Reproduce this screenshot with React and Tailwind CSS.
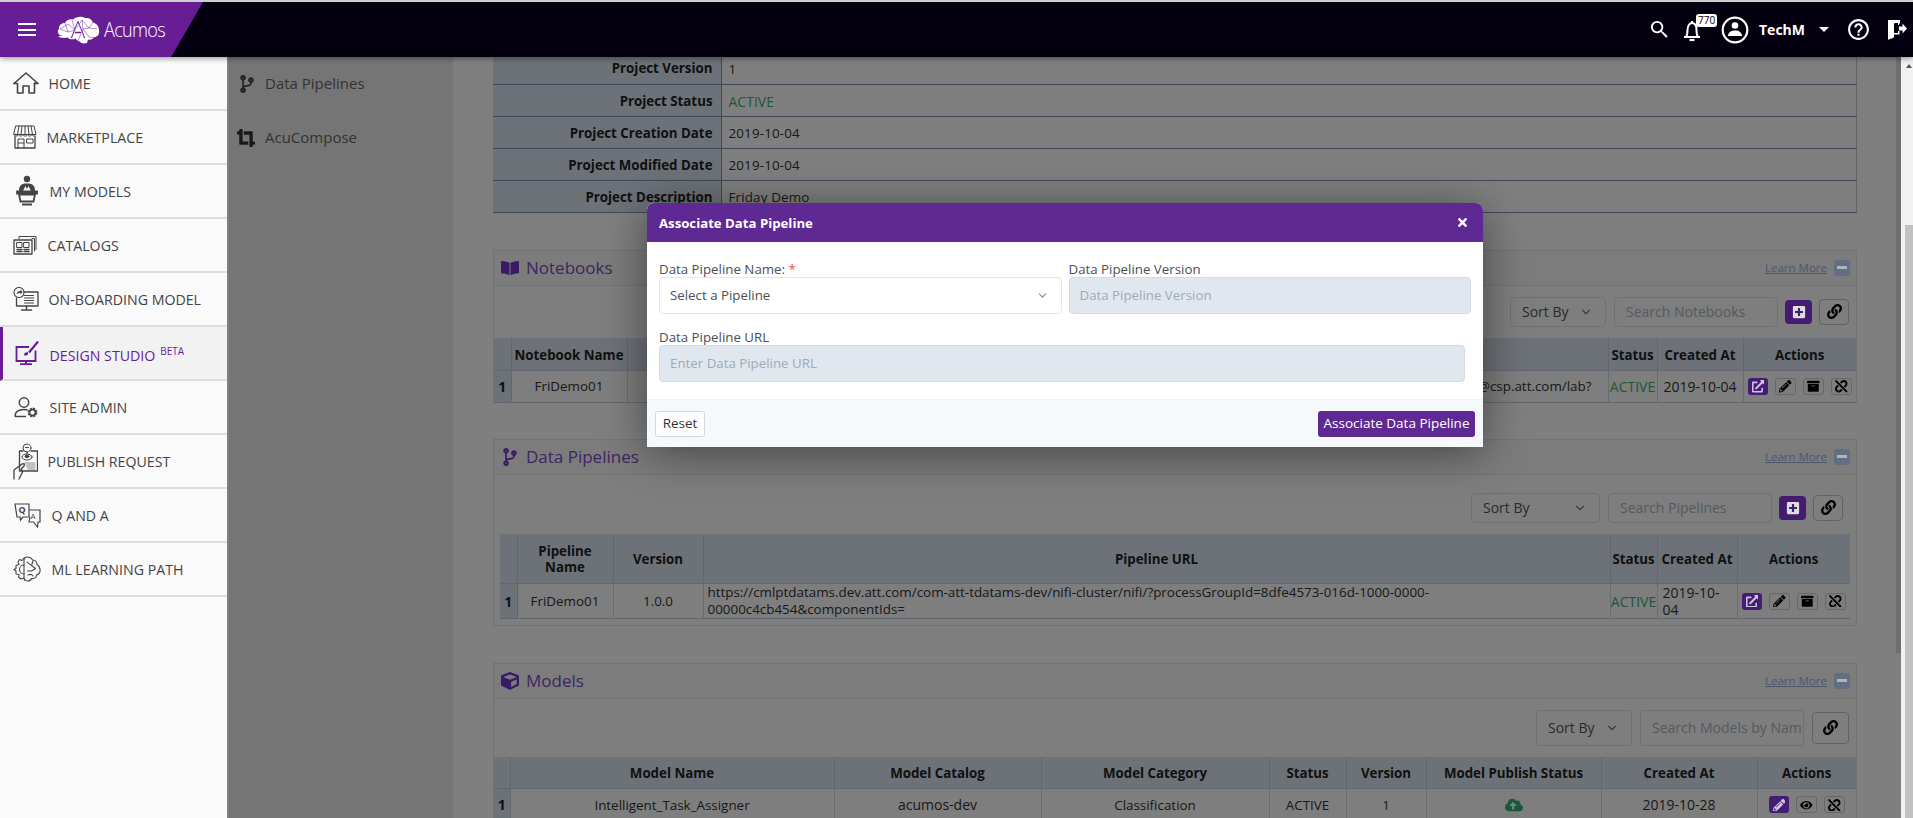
import React from "react";
import {
  FaArchive,
  FaBookOpen,
  FaCloudUploadAlt,
  FaCodeBranch,
  FaCropAlt,
  FaCube,
  FaExternalLinkAlt,
  FaEye,
  FaLink,
  FaPencilAlt,
  FaPlusSquare,
  FaTimes,
  FaUnlink,
} from "react-icons/fa";
import { MdHelpOutline, MdSearch } from "react-icons/md";
import { ChevronDown } from "lucide-react";

const line = { fill: "none", stroke: "#444", strokeWidth: 1.3, strokeLinejoin: "round", strokeLinecap: "round" };

const HomeIcon = () => (
  <svg width="26" height="22" viewBox="0 0 26 22" {...line} strokeWidth="1.6">
    <path d="M1 11.5 13 1l12 10.5h-3.5" />
    <path d="M1 11.5h3.5V21h5.5v-7h6v7h5.5V11" />
  </svg>
);

const MarketIcon = () => (
  <svg width="24" height="24" viewBox="0 0 24 24" {...line} strokeWidth="1">
    <path d="M3 1h18l2 8.5H1z" />
    <path d="M6 1 4.5 9.5M9 1l-1 8.5M12 1v8.5M15 1l1 8.5M18 1l1.5 8.5" />
    <path d="M1 9.5c0 2 4 2 4.500 0 .5 2 4 2 4.500 0 .5 2 4 2 4.500 0 .5 2 4 2 4.500 0 .5 2 3.500 2 3.500 0" />
    <path d="M2 11.500V23h20V11.500" strokeWidth="1.300" />
    <path d="M5 23v-9h6v9M5 18h6M14 14h6v4h-6z" />
  </svg>
);

const ModelsIcon = () => (
  <svg width="22" height="32" viewBox="0 0 22 32">
    <circle cx="11" cy="4" r="3.200" fill="#444" />
    <path d="M3 16c0-6 3-7.500 8-7.500s8 1.500 8 7.500h-4l-2.500-5-1.500 3-1.500-3L7 16z" fill="#444" />
    <path d="M1 16.500h20v2H1zM3 19.500h16l-1.500 7h-13z" fill="none" stroke="#444" strokeWidth="1.800" />
    <path d="M6 29.500h10" stroke="#444" strokeWidth="2" />
  </svg>
);

const CatalogIcon = () => (
  <svg width="24" height="20" viewBox="0 0 24 20" {...line} strokeWidth="1">
    <path d="M1 5h18v14H1z" strokeWidth="1.300" />
    <path d="M19 3.500h2.500V16M19 1.500h4V14.500M6 3.500V1.500h13" />
    <path d="M4 7.500h5v5H4zM11 7.500h5v5h-5z" />
    <path d="M4 14.500h5M11 14.500h5M4 16.500h5M11 16.500h5" strokeWidth="1.400" />
  </svg>
);

const OnboardIcon = () => (
  <svg width="26" height="24" viewBox="0 0 26 24" {...line} strokeWidth="1.100">
    <circle cx="6" cy="5.500" r="5" />
    <path d="M3.500 7.500c.5-2.500 2-3.500 4-3.500V2.500l2 2.500-2 2.500V6c-1.500 0-3 .5-4 1.500z" fill="#444" stroke="none" />
    <path d="M11 5h14v14H3.500v-7.500" strokeWidth="1.300" />
    <path d="M11.500 8.500h9M11.500 11h9M11.500 13.500h9M11.500 16h9" strokeWidth="1.200" />
    <path d="M13.500 19v2.500M8.500 23h10" strokeWidth="1.500" />
  </svg>
);

const DesignIcon = () => (
  <svg width="24" height="24" viewBox="0 0 24 24" fill="none" stroke="#6a1b9a" strokeWidth="1.800">
    <path d="M14 6H1.500v14h19V9.500" />
    <path d="M11 21v2M5 23.200h12" strokeWidth="2" />
    <path d="m23 .5-9 11" strokeWidth="2.200" />
    <path d="M9 14c0-2 2-3.200 4-2.500 1 2-1.500 4-4 2.500z" fill="#6a1b9a" stroke="none" />
  </svg>
);

const AdminIcon = () => (
  <svg width="24" height="21" viewBox="0 0 24 21">
    <circle cx="10" cy="5.500" r="4.700" fill="none" stroke="#444" strokeWidth="1.500" />
    <path d="M1 19.500c0-4.500 3-7 9-7 1.500 0 2.700.2 3.700.5M1 19.500h11" fill="none" stroke="#444" strokeWidth="1.500" />
    <circle cx="18.500" cy="15.500" r="3.600" fill="none" stroke="#444" strokeWidth="2.600" strokeDasharray="2 .8" />
    <circle cx="18.500" cy="15.500" r="3" fill="none" stroke="#444" strokeWidth="1.400" />
  </svg>
);

const PublishIcon = () => (
  <svg width="25" height="37" viewBox="0 0 25 37" {...line} strokeWidth="1">
    <circle cx="14" cy="5" r="4" />
    <path d="M12.500 4.500h3M14 9v4" />
    <path d="M10 8H6.500v20h18V8H18" strokeWidth="1.300" />
    <ellipse cx="14" cy="14" rx="5" ry="3" />
    <ellipse cx="14" cy="13.500" rx="2" ry="1.200" fill="#444" />
    <path d="M11 20h11M13 22h9M14 24h8M15 26h7" strokeWidth="1" stroke="#888" />
    <path d="M1 36V27l8-6c2-.8 3 .8 2 2l-3 3.500c2 1 2 3 .5 4.500L6 36" strokeWidth="1.300" />
  </svg>
);

const QaIcon = () => (
  <svg width="27" height="25" viewBox="0 0 27 25">
    <path d="M1 1h14v13H9l-2.500 3-.5-3H3z" fill="none" stroke="#444" strokeWidth="1.200" />
    <path d="M15 7h11v12h-2l-.5 5-4-5H15l1-5" fill="none" stroke="#444" strokeWidth="1.200" />
    <text x="4.500" y="10" fontSize="9" fontWeight="700" fill="#444" fontFamily="Open Sans">Q</text>
    <text x="16.500" y="16" fontSize="8" fill="#444" fontFamily="Open Sans">A</text>
  </svg>
);

const LearnIcon = () => (
  <svg width="28" height="26" viewBox="0 0 28 26" {...line} strokeWidth="1.100">
    <path d="M11 2 9 4.500 6.500 3.500 5 6 6 8.500 3 9.500v3l-2 1 2 1.500v3l3 .5-.5 2.500L8 23l2.500-1 1.500 2.500" />
    <path d="M11 9a4.500 4.500 0 0 0 0 9" />
    <path d="M14 1c-2 0-3 1.500-3 3v17c0 2 1.500 4 3.500 4 2 0 3.500-1 4-2.500 3 .5 5-1 5-3.500 2.500-1 4-3 3.500-5.500 0-2.500-1.500-4-3-5 0-3-2-4.500-4.500-4.500C18.500 2 16 1 14 1z" />
    <path d="M14 6c2 1 2 3 4.500 3M20 5l-1.500 4.500 4 3-4 2.500-4 0M15 19c2-1 4-.5 5 1" />
  </svg>
);

const BrainLogo = () => (
  <svg width="43" height="28" viewBox="0 0 43 28">
    <path
      d="M6 20C1 20-.5 15 2 13 1.500 9 5 7 8 7c1-3 5-4.500 8-3.500C19 .5 25 0 28 2c4-.5 7 1.500 8 4.500 4 1 6 4.500 6 8 1 4-2 6.500-5 7-1.500 2-4 2.500-6 2l-1 3.500c-3 1-6 .5-7.500-1.500-2-.5-3-1.500-4-3-2.500 1.500-6 1-8-1-3 1-8 .5-9.500-1.500z"
      fill="#fff"
    />
    <path d="M3 13l8-5 7 6 7-10 7 8 8 1M8 7l3 9 7-2-3-10M25 4l1 9 6-1 4-6M11 16l-8-3M26 13l6 8 7 1M26 13l-5 12" stroke="#671d96" strokeWidth=".5" fill="none" />
    <path d="m14.500 22 6.500-16 6.500 16M17 16.500h8" stroke="#671d96" strokeWidth="1.300" fill="none" />
    <path d="m15.500 21.500 5.500-14 5.500 14" stroke="#fff" strokeWidth=".7" fill="none" />
  </svg>
);

const UserCircle = () => (
  <svg width="28" height="28" viewBox="0 0 28 28">
    <circle cx="14" cy="14" r="12.300" fill="none" stroke="#fff" strokeWidth="2.200" />
    <circle cx="14" cy="9.500" r="3.300" fill="#fff" />
    <path d="M7 20c0-3.500 3-5.500 7-5.500s7 2 7 5.500z" fill="#fff" />
  </svg>
);

const BellIcon = () => (
  <svg width="18" height="22" viewBox="0 0 18 22" fill="none" stroke="#fff" strokeWidth="2">
    <path d="M1 17h16M3 17c1.500-2 1.500-4 1.500-7S6 3 9 3s4.500 3 4.500 7 0 5 1.500 7" />
    <path d="M9 1v2" />
    <path d="M6.500 20h5" strokeWidth="2.200" />
  </svg>
);

const ExitIcon = () => (
  <svg width="20" height="21" viewBox="0 0 20 21">
    <path d="M1 1h12v3.500h-1.500V2.700L7 4.500v14l-6 2.300z" fill="#fff" />
    <path d="M7 2.700h5V6H11V4H7zM7 15.500h5.500V12H11v2H7z" fill="#fff" />
    <path d="M12 7.500h3.500V4.500L20 9.500l-4.500 5v-3H12z" fill="#fff" />
  </svg>
);

const navItems = [
  { label: "HOME", Icon: HomeIcon, box: "w-[35.500px]" },
  { label: "MARKETPLACE", Icon: MarketIcon, box: "w-[33.500px]" },
  { label: "MY MODELS", Icon: ModelsIcon, box: "w-[36.500px] pl-[3px]" },
  { label: "CATALOGS", Icon: CatalogIcon, box: "w-[34.500px]" },
  { label: "ON-BOARDING MODEL", Icon: OnboardIcon, box: "w-[35.500px]" },
  { label: "DESIGN STUDIO", Icon: DesignIcon, box: "w-[36.500px] pl-[2px]", active: true },
  { label: "SITE ADMIN", Icon: AdminIcon, box: "w-[36.500px] pl-[1px]" },
  { label: "PUBLISH REQUEST", Icon: PublishIcon, box: "w-[34.500px]" },
  { label: "Q AND A", Icon: QaIcon, box: "w-[38.500px] pl-[1px]" },
  { label: "ML LEARNING PATH", Icon: LearnIcon, box: "w-[38.500px]" },
];

function Header() {
  return (
    <header className="relative z-30 flex h-[57px] shrink-0 items-center border-t-2 border-[#cfcfcf] bg-[#05000f] shadow-[0_2px_5px_rgba(0,0,0,0.35)]">
      <div className="flex h-full w-[203px] items-center bg-[#671d96] [clip-path:polygon(0_0,100%_0,84.300%_100%,0_100%)]">
        <div className="ml-[18px] flex w-[18px] flex-col gap-[3.500px]">
          <span className="h-[2px] bg-white" />
          <span className="h-[2px] bg-white" />
          <span className="h-[2px] bg-white" />
        </div>
        <div className="ml-[21px]">
          <BrainLogo />
        </div>
        <span className="ml-[4px] origin-left scale-x-[0.86] text-[21px] font-light tracking-[-0.8px] text-white">Acumos</span>
      </div>
      <div className="ml-auto flex items-center text-white">
        <MdSearch className="text-[23px]" />
        <div className="relative ml-[12px] mr-[20px] mt-[2px]">
          <BellIcon />
          <span className="absolute left-[13px] top-[-6px] rounded-[3px] bg-white px-[2px] text-[10px] leading-[13px] text-black">770</span>
        </div>
        <UserCircle />
        <span className="ml-[10px] text-[14px] font-bold">TechM</span>
        <span className="ml-[14px] mr-[5px] h-0 w-0 border-x-[5px] border-t-[5px] border-x-transparent border-t-white" />
        <MdHelpOutline className="ml-[12px] text-[25px]" />
        <span className="ml-[16px] mr-[6px]">
          <ExitIcon />
        </span>
      </div>
    </header>
  );
}

function Sidebar() {
  return (
    <aside className="relative z-20 w-[227px] shrink-0 bg-[#fafafa] text-[14.200px] text-[#444]">
      {navItems.map(({ label, Icon, box, active }) => (
        <div
          key={label}
          className={
            active
              ? "flex h-[54px] items-center border-b-2 border-[#dedede] border-l-[3px] border-l-[#6a1b9a] bg-[#f2f2f2] pl-[10px] text-[#6a1b9a]"
              : "flex h-[54px] items-center border-b-2 border-[#dedede] pl-[13px]"
          }
        >
          <span className={`flex shrink-0 items-center ${box}`}>
            <Icon />
          </span>
          <span className={active ? "mt-[6px]" : "mt-[2px]"}>{label}</span>
          {active && <span className="ml-[5px] mt-[-3px] text-[10px]">BETA</span>}
        </div>
      ))}
    </aside>
  );
}

function SubNav() {
  return (
    <nav className="w-[226px] shrink-0 border-l-2 border-white bg-[#ebebeb] text-[15px] text-[#666]">
      <div className="flex h-[54px] items-center pl-[10px]">
        <FaCodeBranch className="w-[16px] text-[18px] text-[#444]" />
        <span className="ml-[10px] mt-[-2px]">Data Pipelines</span>
      </div>
      <div className="flex h-[54px] items-center pl-[8px]">
        <FaCropAlt className="w-[18px] text-[18px] text-[#333]" />
        <span className="ml-[10px] mt-[-2px]">AcuCompose</span>
      </div>
    </nav>
  );
}

function InfoTable() {
  const rows = [
    ["Project Version", "1"],
    ["Project Status", "ACTIVE"],
    ["Project Creation Date", "2019-10-04"],
    ["Project Modified Date", "2019-10-04"],
    ["Project Description", "Friday Demo"],
  ];
  return (
    <table className="mt-[-5px] w-full table-fixed border-collapse border-r border-[#c5c9d0]">
      <tbody>
        {rows.map(([k, v]) => (
          <tr key={k} className="h-[32px] border-b border-[#7f90b8]">
            <th className="w-[228px] border-r border-[#7f90b8] bg-[#dbe5f0] pr-[8px] pt-[3px] text-right text-[13.300px] font-bold text-[#222]">{k}</th>
            <td className={v === "ACTIVE" ? "pl-[7px] pt-[3px] font-medium text-[#42ad70]" : "pl-[7px] pt-[3px] text-[13.400px] tracking-[0.15px]"}>{v}</td>
          </tr>
        ))}
      </tbody>
    </table>
  );
}

function SortSelect({ className }) {
  return (
    <div className={`flex items-center justify-between rounded-[4px] border border-[#dde1e6] pl-[11px] pr-[12px] text-[#555] ${className}`}>
      Sort By
      <ChevronDown size={14} className="text-[#777]" />
    </div>
  );
}

function SearchBox({ text, className }) {
  return (
    <div className={`ml-[8px] flex w-[164px] items-center overflow-hidden whitespace-nowrap rounded-[4px] border border-[#dde1e6] pl-[11px] pr-[10px] text-[#a9b4c2] ${className}`}>
      {text}
    </div>
  );
}

function AddBtn() {
  return (
    <span className="relative z-20 ml-[7px] flex h-[24px] w-[27px] items-center justify-center rounded-[4px] bg-[#431b70] text-[14px] text-[#ddd]">
      <FaPlusSquare />
    </span>
  );
}

function LinkBtn({ className }) {
  return (
    <span className={`flex items-center justify-center rounded-[4px] border border-[#c4c4c4] text-[15px] text-black ${className}`}>
      <FaLink />
    </span>
  );
}

function ActionBtn({ children, purple }) {
  return purple ? (
    <span className="relative z-20 flex h-[17px] w-[20px] items-center justify-center rounded-[3px] bg-[#451d75] text-[12.500px] text-[#cfc6e0]">{children}</span>
  ) : (
    <span className="flex h-[17px] w-[21px] items-center justify-center rounded-[3px] border border-[#cfcfcf] text-[12.500px] text-black">{children}</span>
  );
}

function Card({ icon, title, children, className }) {
  return (
    <section className={`border border-[#e6e6e6] bg-[#fcfcfc] ${className}`}>
      <div className="flex h-[35px] items-center border-b border-[#e6e6e6] bg-[#f8f8f8] pl-[7px] pr-[6px]">
        <span className="text-[18px] text-[#7534c8]">{icon}</span>
        <span className="ml-[7px] text-[17px] text-[#7a4fc0]">{title}</span>
        <a className="ml-auto text-[11.500px] text-[#9ab0d8] underline">Learn More</a>
        <span className="relative z-20 ml-[7px] flex h-[16px] w-[16px] items-center justify-center rounded-[2px] bg-[#626e82]">
          <span className="h-[3px] w-[10px] bg-[#aeb2ba]" />
        </span>
      </div>
      {children}
    </section>
  );
}

const th = "border-r border-[#c5cfdb] bg-[#dbe5f0] pt-[2px] text-[13.300px] font-bold leading-[16px] text-[#222] last:border-r-0";
const td = "border-r border-[#d5dae0] text-center text-[13.400px] last:border-r-0";
const date = "border-r border-[#d5dae0] text-center text-[14px] last:border-r-0";
const idx = "border-r border-[#c5cfdb] bg-[#dbe5f0] text-center font-bold text-[#222]";
const active = "border-r border-[#d5dae0] text-center text-[14px] text-[#42ad70]";

function NotebooksCard() {
  return (
    <Card icon={<FaBookOpen />} title="Notebooks" className="mt-[37px] h-[153px]">
      <div className="flex h-[52px] items-center justify-end pr-[7px]">
        <SortSelect className="h-[30px] w-[96px]" />
        <SearchBox text="Search Notebooks" className="h-[30px]" />
        <AddBtn />
        <LinkBtn className="ml-[7px] h-[26px] w-[30px]" />
      </div>
      <table className="w-full table-fixed border-collapse">
        <colgroup>
          <col className="w-[17px]" />
          <col className="w-[116px]" />
          <col />
          <col className="w-[49px]" />
          <col className="w-[86px]" />
          <col className="w-[113px]" />
        </colgroup>
        <thead>
          <tr className="h-[33px] border-b border-[#c5cfdb]">
            <th className={th} />
            <th className={th}>Notebook Name</th>
            <th className={th} />
            <th className={th}>Status</th>
            <th className={th}>Created At</th>
            <th className={th}>Actions</th>
          </tr>
        </thead>
        <tbody>
          <tr className="h-[32px] border-b border-[#c5cfdb]">
            <td className={idx}>1</td>
            <td className={td}>FriDemo01</td>
            <td className={`${td} pr-[16px] text-right`}>@csp.att.com/lab?</td>
            <td className={active}>ACTIVE</td>
            <td className={date}>2019-10-04</td>
            <td className={td}>
              <div className="flex justify-center gap-[7px]">
                <ActionBtn purple><FaExternalLinkAlt /></ActionBtn>
                <ActionBtn><FaPencilAlt /></ActionBtn>
                <ActionBtn><FaArchive /></ActionBtn>
                <ActionBtn><FaUnlink /></ActionBtn>
              </div>
            </td>
          </tr>
        </tbody>
      </table>
    </Card>
  );
}

function PipelinesCard() {
  return (
    <Card icon={<FaCodeBranch />} title="Data Pipelines" className="mt-[36px] h-[187px]">
      <div className="flex h-[59px] items-center justify-end pr-[13px] pt-[7px]">
        <SortSelect className="h-[30px] w-[129px]" />
        <SearchBox text="Search Pipelines" className="h-[30px]" />
        <AddBtn />
        <LinkBtn className="ml-[7px] h-[26px] w-[30px]" />
      </div>
      <div className="px-[6px]">
        <table className="w-full table-fixed border-collapse">
          <colgroup>
            <col className="w-[17px]" />
            <col className="w-[96px]" />
            <col className="w-[90px]" />
            <col />
            <col className="w-[47px]" />
            <col className="w-[80px]" />
            <col className="w-[113px]" />
          </colgroup>
          <thead>
            <tr className="h-[50px] border-b border-[#c5cfdb]">
              <th className={th} />
              <th className={th}>Pipeline<br />Name</th>
              <th className={th}>Version</th>
              <th className={th}>Pipeline URL</th>
              <th className={th}>Status</th>
              <th className={th}>Created At</th>
              <th className={th}>Actions</th>
            </tr>
          </thead>
          <tbody>
            <tr className="h-[34px] border-b border-[#c5cfdb] leading-[17px]">
              <td className={idx}>1</td>
              <td className={td}>FriDemo01</td>
              <td className={td}>1.0.0</td>
              <td className={`${td} pl-[4px] text-left`}>
                https://cmlptdatams.dev.att.com/com-att-tdatams-dev/nifi-cluster/nifi/?processGroupId=8dfe4573-016d-1000-0000-<br />
                00000c4cb454&amp;componentIds=
              </td>
              <td className={active}>ACTIVE</td>
              <td className={`${date} pl-[5px] text-left`}>2019-10-<br />04</td>
              <td className={td}>
                <div className="flex justify-center gap-[7px]">
                  <ActionBtn purple><FaExternalLinkAlt /></ActionBtn>
                  <ActionBtn><FaPencilAlt /></ActionBtn>
                  <ActionBtn><FaArchive /></ActionBtn>
                  <ActionBtn><FaUnlink /></ActionBtn>
                </div>
              </td>
            </tr>
          </tbody>
        </table>
      </div>
    </Card>
  );
}

function ModelsCard() {
  return (
    <Card icon={<FaCube />} title="Models" className="mt-[37px]">
      <div className="flex h-[58px] items-center justify-end pr-[7px]">
        <SortSelect className="h-[36px] w-[96px]" />
        <SearchBox text="Search Models by Nam" className="h-[36px]" />
        <LinkBtn className="ml-[8px] h-[32px] w-[37px]" />
      </div>
      <table className="w-full table-fixed border-collapse">
        <colgroup>
          <col className="w-[16px]" />
          <col className="w-[324px]" />
          <col className="w-[207px]" />
          <col className="w-[228px]" />
          <col className="w-[77px]" />
          <col className="w-[80px]" />
          <col className="w-[175px]" />
          <col className="w-[156px]" />
          <col />
        </colgroup>
        <thead>
          <tr className="h-[32px] border-b border-[#c5cfdb]">
            <th className={th} />
            <th className={th}>Model Name</th>
            <th className={th}>Model Catalog</th>
            <th className={th}>Model Category</th>
            <th className={th}>Status</th>
            <th className={th}>Version</th>
            <th className={th}>Model Publish Status</th>
            <th className={th}>Created At</th>
            <th className={th}>Actions</th>
          </tr>
        </thead>
        <tbody>
          <tr className="h-[32px]">
            <td className={idx}>1</td>
            <td className={td}>Intelligent_Task_Assigner</td>
            <td className={date}>acumos-dev</td>
            <td className={td}>Classification</td>
            <td className={td}>ACTIVE</td>
            <td className={td}>1</td>
            <td className={td}>
              <FaCloudUploadAlt className="mx-auto text-[18px] text-[#30b070]" />
            </td>
            <td className={date}>2019-10-28</td>
            <td className={td}>
              <div className="flex justify-center gap-[7px]">
                <ActionBtn purple><FaPencilAlt /></ActionBtn>
                <ActionBtn><FaEye /></ActionBtn>
                <ActionBtn><FaUnlink /></ActionBtn>
              </div>
            </td>
          </tr>
        </tbody>
      </table>
    </Card>
  );
}

function AssociateModal() {
  return (
    <div className="absolute left-[420px] top-[146px] z-30 w-[836px] overflow-hidden rounded-t-[7px] bg-white text-[13.300px] text-[#495057] shadow-[0_6px_45px_rgba(0,0,0,0.45)]">
      <div className="flex h-[39px] items-center justify-between bg-[#5f2994] pl-[12px] pr-[14px] pt-[2px] text-[13.200px] font-bold text-white">
        Associate Data Pipeline
        <FaTimes className="mb-[3px] text-[13px]" />
      </div>
      <div className="h-[157px] px-[12px] pt-[17px]">
        <div className="flex gap-[7px]">
          <div className="w-[403px]">
            <label className="block h-[18px] leading-[21px]">
              Data Pipeline Name: <span className="text-[#e55353]">*</span>
            </label>
            <div className="flex h-[37px] items-center justify-between rounded-[4px] border border-[#e2e6ee] pl-[10px] pr-[12px]">
              Select a Pipeline
              <ChevronDown size={13} className="text-[#888]" />
            </div>
          </div>
          <div className="w-[403px]">
            <label className="block h-[18px] leading-[21px]">Data Pipeline Version</label>
            <div className="flex h-[37px] items-center rounded-[4px] border border-[#d3dae4] bg-[#e1e7ef] pl-[10px] text-[#a0aab8]">
              Data Pipeline Version
            </div>
          </div>
        </div>
        <label className="mt-[13px] block h-[18px] leading-[21px]">Data Pipeline URL</label>
        <div className="flex h-[37px] w-[806px] items-center rounded-[4px] border border-[#d3dae4] bg-[#e1e7ef] pl-[10px] text-[#a0aab8]">
          Enter Data Pipeline URL
        </div>
      </div>
      <div className="flex h-[48px] items-center justify-between border-t border-[#eef1f5] bg-[#f5f9fc] pl-[8px] pr-[8px]">
        <button className="h-[26px] w-[50px] rounded-[3px] border border-[#d3dae4] bg-white text-[13.500px] text-[#333]">Reset</button>
        <button className="h-[26px] w-[157px] rounded-[3px] bg-[#5f2994] text-[13.500px] text-white">Associate Data Pipeline</button>
      </div>
    </div>
  );
}

export default function App() {
  return (
    <div className="flex h-[818px] w-[1913px] flex-col overflow-hidden bg-white font-['Open_Sans',sans-serif] text-[14px] text-[#333]">
      <Header />
      <div className="flex min-h-0 flex-1">
        <Sidebar />
        <div className="relative flex min-w-0 flex-1">
          <SubNav />
          <main className="min-w-0 flex-1 overflow-hidden bg-white pl-[40px] pr-[39px]">
            <InfoTable />
            <NotebooksCard />
            <PipelinesCard />
            <ModelsCard />
          </main>
          <div className="w-[5px] shrink-0 bg-[#ffffff]">
            <div className="h-[596px] bg-[#dcdcdc]" />
          </div>
          <div className="absolute inset-0 z-10 bg-black/50" />
          <AssociateModal />
        </div>
        <div className="relative z-20 w-[12px] shrink-0 bg-[#f1f1f1]">
          <span className="absolute left-[5px] top-[7px] h-0 w-0 border-x-[3px] border-b-[4px] border-x-transparent border-b-[#555]" />
          <div className="ml-[4px] mt-[168px] h-[600px] bg-[#c1c1c1]" />
        </div>
      </div>
    </div>
  );
}
